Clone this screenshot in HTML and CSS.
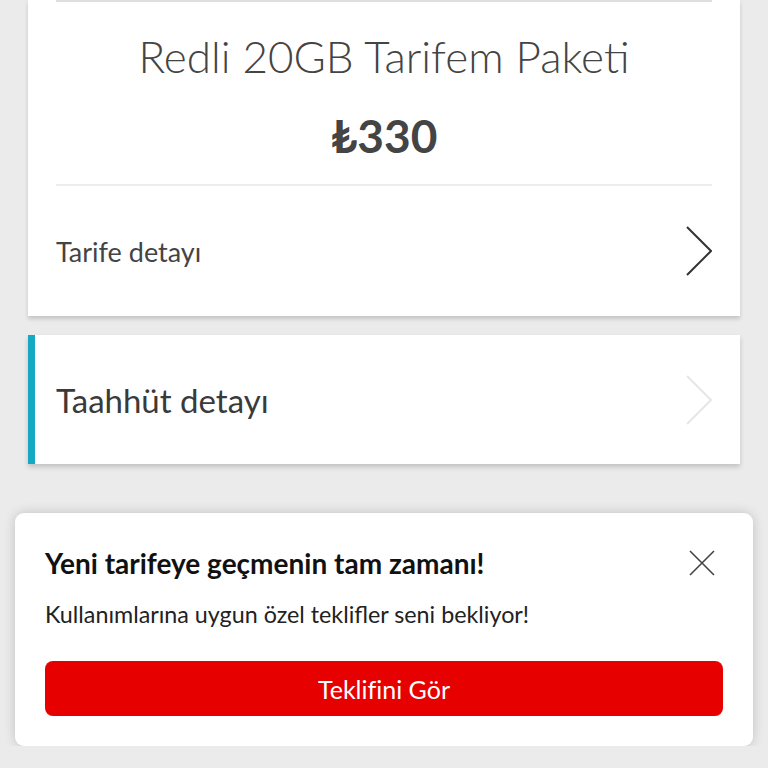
FILE: index.html
```html
<!DOCTYPE html>
<html lang="tr">
<head>
<meta charset="UTF-8">
<meta name="viewport" content="width=device-width, initial-scale=1.0">
<title>Tarifem</title>
<link rel="stylesheet" href="styles.css">
</head>
<body>
    <div class="card paket-card">
        <div class="top-line"></div>
        <h1 class="paket-title">Redli 20GB Tarifem Paketi</h1>
        <div class="paket-price">₺330</div>
        <div class="divider"></div>
        <div class="detail-row">
            <span class="detail-text">Tarife detayı</span>
            <svg class="chevron" width="26" height="50" viewBox="0 0 26 50">
                <path d="M1 1 L25 25 L1 49" fill="none" stroke="#333" stroke-width="2"/>
            </svg>
        </div>
    </div>

    <div class="card taahhut-card">
        <span class="taahhut-text">Taahhüt detayı</span>
        <svg class="chevron light" width="26" height="50" viewBox="0 0 26 50">
            <path d="M1 1 L25 25 L1 49" fill="none" stroke="#e6e6e6" stroke-width="2"/>
        </svg>
    </div>

    <div class="popup">
        <div class="popup-head">
            <h2 class="popup-title">Yeni tarifeye geçmenin tam zamanı!</h2>
            <svg class="close-icon" width="26" height="26" viewBox="0 0 26 26">
                <path d="M1 1 L25 25 M25 1 L1 25" stroke="#444" stroke-width="1.6"/>
            </svg>
        </div>
        <p class="popup-text">Kullanımlarına uygun özel teklifler seni bekliyor!</p>
        <button class="popup-btn">Teklifini Gör</button>
    </div>
</body>
</html>
```
FILE: styles.css
```css
body {
    margin: 0;
    padding: 0;
    background-color: #ebebeb;
    font-family: Lato, "Open Sans", sans-serif;
    color: #333;
}

.card {
    background-color: #fff;
    margin: 0 28px;
    box-shadow: 0 3px 4px rgba(0, 0, 0, 0.16);
}

.paket-card {
    padding: 0 28px;
}

.top-line {
    height: 2px;
    background-color: #dedede;
}

.paket-title {
    margin: 0;
    padding-top: 25px;
    text-align: center;
    font-size: 44px;
    font-weight: 300;
    line-height: 58px;
    color: #444;
}

.paket-price {
    text-align: center;
    font-size: 46px;
    font-weight: 700;
    line-height: 60px;
    margin-top: 21px;
    color: #444;
}

.divider {
    height: 2px;
    background-color: #ededed;
    margin-top: 18px;
}

.detail-row {
    display: flex;
    align-items: center;
    justify-content: space-between;
    height: 130px;
}

.detail-text {
    font-size: 27px;
    color: #444;
}

.taahhut-card {
    margin-top: 19px;
    height: 129px;
    border-left: 7px solid #17a8c4;
    padding: 0 28px 0 21px;
    display: flex;
    align-items: center;
    justify-content: space-between;
    box-shadow: 0 3px 5px rgba(0, 0, 0, 0.18);
}

.taahhut-text {
    font-size: 33px;
    color: #3a3a3a;
}

.popup {
    margin: 49px 15px 0;
    background-color: #fff;
    border-radius: 9px;
    padding: 35px 30px 30px;
    box-shadow: 0 0 12px rgba(0, 0, 0, 0.18);
}

.popup-head {
    display: flex;
    align-items: center;
    justify-content: space-between;
    padding-right: 8px;
}

.popup-title {
    margin: 0;
    font-size: 28px;
    line-height: 30px;
    font-weight: 700;
    color: #111;
}

.popup-text {
    margin: 23px 0 0;
    font-size: 23.3px;
    line-height: 26px;
    color: #222;
}

.popup-btn {
    display: block;
    width: 100%;
    height: 55px;
    margin-top: 34px;
    border: none;
    border-radius: 8px;
    background-color: #e60000;
    color: #fff;
    font-family: Lato, "Open Sans", sans-serif;
    font-size: 25px;
}
```
